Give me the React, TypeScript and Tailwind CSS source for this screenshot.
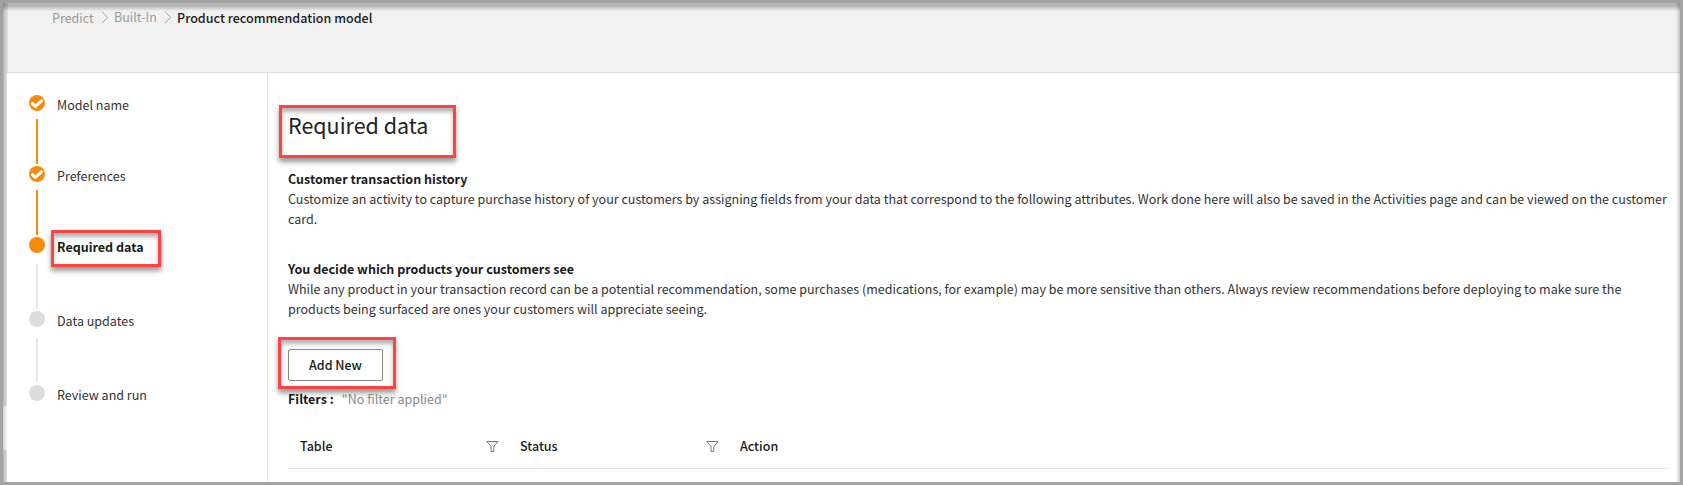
import React from "react";

const steps = [
  { label: "Model name", state: "done", row: "h-[71px]", line: "mt-2 bg-[#f78c0a]" },
  { label: "Preferences", state: "done", row: "h-[71px]", line: "mt-2 bg-[#f78c0a]" },
  { label: "Required data", state: "current", row: "h-[74px]", line: "mt-[11px] bg-[#e8e8e8]" },
  { label: "Data updates", state: "todo", row: "h-[74px]", line: "mt-[11px] bg-[#e8e8e8]" },
  { label: "Review and run", state: "todo", row: "h-[74px]", line: "" },
];

const callout =
  "pointer-events-none absolute border-[3px] border-[#ff4242] shadow-[0_4px_5px_rgba(0,0,0,0.4),inset_0_4px_4px_rgba(0,0,0,0.3)]";

function Chevron() {
  return (
    <svg width="8" height="13" viewBox="0 0 8 13" fill="none" stroke="#a3a3a3">
      <path d="M1 .7 6.6 6.4 1 12.2" />
    </svg>
  );
}

function Funnel() {
  return (
    <svg width="13" height="11" viewBox="0 0 13 11" fill="none" stroke="#666" strokeWidth="0.9">
      <path d="M.8.5h11.2L7.8 5.4v5H5v-5L.8.5Z" />
    </svg>
  );
}

function StepDot({ state }: { state: string }) {
  return (
    <svg width="16" height="16" viewBox="0 0 16 16" className="shrink-0">
      <circle cx="8" cy="8" r="8" fill={state === "todo" ? "#dddddd" : "#f78c0a"} />
      {state === "done" && (
        <path d="M2.5 7.7 6.2 11.4 13.6 4.8" fill="none" stroke="#fff" strokeWidth="2.9" />
      )}
    </svg>
  );
}

export default function App() {
  return (
    <div className="relative h-[485px] w-[1683px] overflow-hidden border-[3px] border-[#a3a3a3] bg-white pl-1 font-['Noto_Sans_CJK_SC','Noto_Sans',sans-serif] text-[12.534px] leading-5 text-[#333]">
      <div className="flex h-full flex-col">
        <header className="h-[70px] shrink-0 border-b border-l border-[#dcdcdc] bg-[#f1f1f1] pl-11">
          <nav className="flex h-[30px] items-center whitespace-nowrap text-[#999]">
            <span className="w-[49px]">Predict</span>
            <span className="w-[13px] pb-0.5"><Chevron /></span>
            <span className="w-[50px] pb-0.5">Built-In</span>
            <span className="w-[13px] pb-0.5"><Chevron /></span>
            <span className="font-medium tracking-[0.02px] text-[#1a1a1a]">Product recommendation model</span>
          </nav>
        </header>
        <div className="flex min-h-0 flex-1">
          <aside className="w-[261px] shrink-0 border-r border-[#e5e5e5] pl-[22px] pt-[22px]">
            {steps.map((s) => (
              <div key={s.label} className={`flex gap-3 ${s.row}`}>
                <div className="flex flex-col items-center">
                  <StepDot state={s.state} />
                  {s.line && <div className={`h-[45px] w-0.5 ${s.line}`} />}
                </div>
                <span className={s.state === "current" ? "font-bold text-[#1a1a1a]" : ""}>{s.label}</span>
              </div>
            ))}
          </aside>
          <main className="flex-1 whitespace-nowrap pl-5 pr-[11px] pt-[34px]">
            <h1 className="h-[62px] text-[21.487px] leading-9 text-[#222]">Required data</h1>
            <section className="h-[90px]">
              <h2 className="font-bold text-[#1a1a1a]">Customer transaction history</h2>
              <p className="tracking-[0.009px]">Customize an activity to capture purchase history of your customers by assigning fields from your data that correspond to the following attributes. Work done here will also be saved in the Activities page and can be viewed on the customer<br />card.</p>
            </section>
            <section className="h-[90px]">
              <h2 className="font-bold text-[#1a1a1a]">You decide which products your customers see</h2>
              <p className="tracking-[0.009px]">While any product in your transaction record can be a potential recommendation, some purchases (medications, for example) may be more sensitive than others. Always review recommendations before deploying to make sure the<br />products being surfaced are ones your customers will appreciate seeing.</p>
            </section>
            <button className="block h-8 w-[95px] rounded-[2px] border border-[#888] font-medium text-[#1a1a1a]">Add New</button>
            <div className="mt-2 flex gap-2">
              <span className="font-bold text-[#1a1a1a]">Filters :</span>
              <span className="text-[#888]">"No filter applied"</span>
            </div>
            <div className="mt-[17px] flex h-[43px] items-center border-b border-[#e5e5e5] pb-0.5 pl-3 font-medium text-[#1a1a1a]">
              <span className="w-[186px]">Table</span>
              <span className="w-[34px]"><Funnel /></span>
              <span className="w-[186px]">Status</span>
              <span className="w-[34px]"><Funnel /></span>
              <span>Action</span>
            </div>
          </main>
        </div>
      </div>
      <div className="absolute left-0 top-0 h-[403px] w-1 bg-linear-to-r from-[#b5b5b5] to-[#dedede]" />
      <div className="absolute left-0 top-[403px] h-11 w-1 bg-linear-to-r from-[#d0d0d0] to-[#fafafa]" />
      <div className="absolute left-0 top-[447px] h-8 w-1 bg-linear-to-r from-[#b5b5b5] to-[#dedede]" />
      <div className="absolute inset-x-0 top-0 h-2 bg-linear-to-b from-black/25 from-40% to-transparent" />
      <div className="absolute inset-y-0 right-0 w-1 bg-linear-to-l from-black/20 to-transparent" />
      <div className={`${callout} left-12 top-[227px] h-[37px] w-[110px]`} />
      <div className={`${callout} left-[276px] top-[102px] h-[53px] w-[177px]`} />
      <div className={`${callout} left-[275px] top-[334px] h-[52px] w-[118px]`} />
    </div>
  );
}
